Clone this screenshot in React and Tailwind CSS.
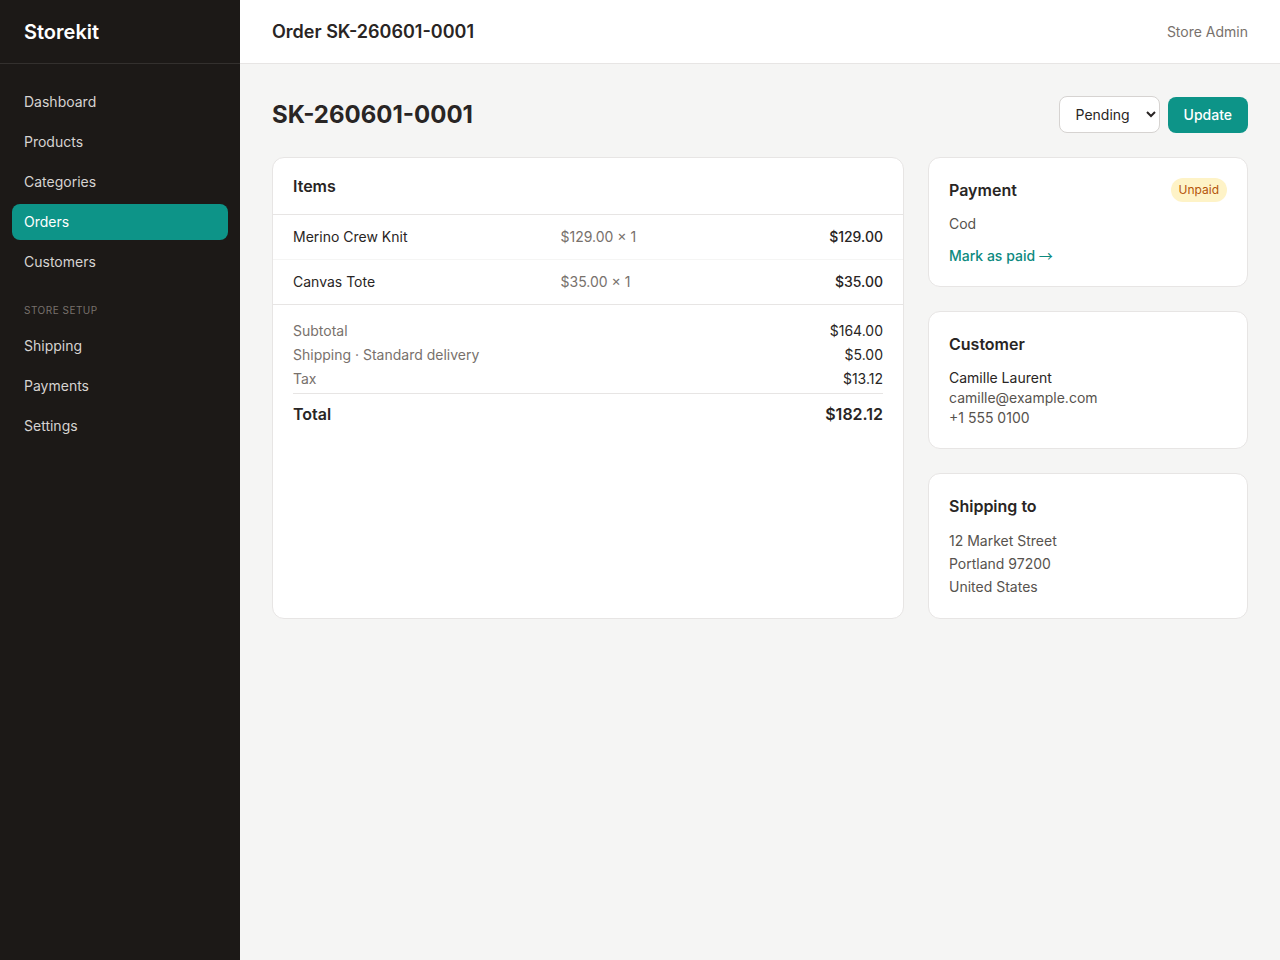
import React from 'react';

const mainNav = ['Dashboard', 'Products', 'Categories', 'Orders', 'Customers'];
const setupNav = ['Shipping', 'Payments', 'Settings'];

const items = [
  { name: 'Merino Crew Knit', price: '$129.00 × 1', total: '$129.00' },
  { name: 'Canvas Tote', price: '$35.00 × 1', total: '$35.00' },
];

const totals = [
  { label: 'Subtotal', value: '$164.00' },
  { label: 'Shipping · Standard delivery', value: '$5.00' },
  { label: 'Tax', value: '$13.12' },
];

const NavItem = ({ label, active }) => (
  <a
    href="#"
    className={`block rounded-lg px-3 py-2 text-sm ${
      active ? 'bg-[#0d9488] text-white' : 'text-[#d6d3d1]'
    }`}
  >
    {label}
  </a>
);

const Card = ({ children }) => (
  <div className="rounded-xl border border-[#e7e5e4] bg-white p-5">{children}</div>
);

const App = () => {
  return (
    <div className="flex min-h-[960px] bg-[#f5f5f4] font-['Inter',sans-serif] text-[#292524]">
      <aside className="w-60 shrink-0 bg-[#1c1917]">
        <div className="flex h-16 items-center border-b border-white/10 px-6 text-xl font-semibold text-white">
          Storekit
        </div>
        <nav className="flex flex-col gap-1 px-3 py-5">
          {mainNav.map((label) => (
            <NavItem key={label} label={label} active={label === 'Orders'} />
          ))}
          <div className="px-3 pb-[6px] pt-[19px] text-[10px] uppercase tracking-wider text-[#78716c]">
            Store setup
          </div>
          {setupNav.map((label) => (
            <NavItem key={label} label={label} />
          ))}
        </nav>
      </aside>

      <div className="min-w-0 flex-1">
        <header className="flex h-16 items-center justify-between border-b border-[#e7e5e4] bg-white px-8">
          <h1 className="text-lg font-semibold">Order SK-260601-0001</h1>
          <span className="text-sm text-[#78716c]">Store Admin</span>
        </header>

        <main className="p-8">
          <div className="mb-6 flex items-center justify-between">
            <h2 className="text-2xl font-bold">SK-260601-0001</h2>
            <div className="flex items-center gap-2">
              <select className="rounded-lg border border-[#d6d3d1] bg-white px-3 py-2 text-sm">
                <option>Pending</option>
                <option>Paid</option>
                <option>Shipped</option>
              </select>
              <button type="button" className="rounded-lg bg-[#0d9488] px-4 py-2 text-sm font-medium text-white">
                Update
              </button>
            </div>
          </div>

          <div className="grid grid-cols-[1fr_320px] gap-6">
            <div className="rounded-xl border border-[#e7e5e4] bg-white">
              <div className="border-b border-[#e7e5e4] px-5 py-4 text-base font-semibold">Items</div>
              <div className="border-b border-[#e7e5e4]">
                {items.map((item, index) => (
                  <div
                    key={item.name}
                    className={`grid grid-cols-[267.5px_1fr_auto] px-5 py-3 text-sm ${
                      index > 0 ? 'border-t border-[#f5f5f4]' : ''
                    }`}
                  >
                    <span>{item.name}</span>
                    <span className="text-[#78716c]">{item.price}</span>
                    <span className="font-medium">{item.total}</span>
                  </div>
                ))}
              </div>
              <div className="flex flex-col gap-1 px-5 py-4 text-sm">
                {totals.map((row) => (
                  <div key={row.label} className="flex justify-between">
                    <span className="text-[#78716c]">{row.label}</span>
                    <span>{row.value}</span>
                  </div>
                ))}
                <div className="flex justify-between border-t border-[#e7e5e4] pt-2 text-base font-semibold">
                  <span>Total</span>
                  <span>$182.12</span>
                </div>
              </div>
            </div>

            <div className="flex flex-col gap-6">
              <Card>
                <div className="mb-3 flex items-center justify-between">
                  <h3 className="text-base font-semibold">Payment</h3>
                  <span className="rounded-full bg-[#fef3c7] px-2 py-1 text-xs text-[#b45309]">Unpaid</span>
                </div>
                <p className="text-sm text-[#57534e]">Cod</p>
                <a href="#" className="mt-3 block text-sm font-medium text-[#0d8a7f]">
                  Mark as paid <span className="font-['Noto_Sans_CJK_SC',sans-serif] font-normal leading-none">→</span>
                </a>
              </Card>

              <Card>
                <h3 className="mb-3 text-base font-semibold">Customer</h3>
                <p className="text-sm">Camille Laurent</p>
                <p className="text-sm text-[#57534e]">camille@example.com</p>
                <p className="text-sm text-[#57534e]">+1 555 0100</p>
              </Card>

              <Card>
                <h3 className="mb-3 text-base font-semibold">Shipping to</h3>
                <p className="text-sm leading-relaxed text-[#57534e]">
                  12 Market Street
                  <br />
                  Portland 97200
                  <br />
                  United States
                </p>
              </Card>
            </div>
          </div>
        </main>
      </div>
    </div>
  );
};

export default App;
